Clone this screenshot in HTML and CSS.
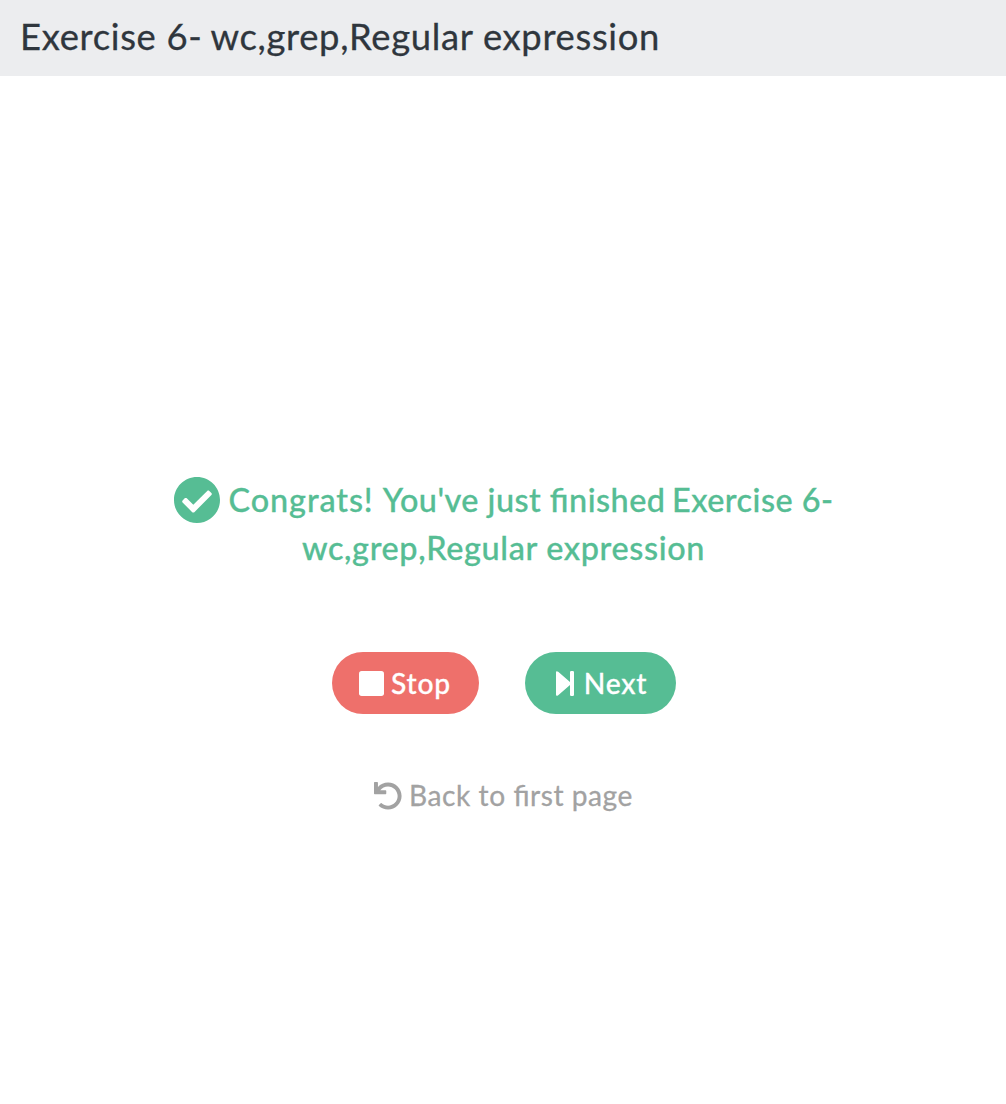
FILE: index.html
```html
<!DOCTYPE html>
<html lang="en">
<head>
<meta charset="utf-8">
<title>Exercise 6- wc,grep,Regular expression</title>
<link rel="stylesheet" href="styles.css">
</head>
<body>
<header class="bar"><h1 class="title">Exercise 6-<span class="tight"> </span>wc,grep,Regular expression</h1></header>
<main class="result">
  <p class="message"><svg class="check" viewBox="8 8 496 496"><path fill="currentColor" d="M504 256c0 136.967-111.033 248-248 248S8 392.967 8 256 119.033 8 256 8s248 111.033 248 248zM227.314 387.314l184-184c6.248-6.248 6.248-16.379 0-22.627l-22.627-22.627c-6.248-6.249-16.379-6.249-22.628 0L216 308.118l-70.059-70.059c-6.248-6.248-16.379-6.248-22.628 0l-22.627 22.627c-6.248 6.248-6.248 16.379 0 22.627l104 104c6.249 6.249 16.379 6.249 22.628.001z"/></svg><span><span class="lead">Congrats! </span>You've just finished<span class="tight"> </span>Exercise 6-<br></span><span class="name">wc,grep,Regular expression</span></p>
  <div class="actions">
    <button class="button stop"><svg class="stop-icon" viewBox="0 0 25 25"><rect width="25" height="25" rx="2.7" fill="currentColor"/></svg><span>Stop</span></button>
    <button class="button next"><svg class="next-icon" viewBox="0 0 18 25"><path fill="currentColor" d="M0 1.5Q0-.8 2.2 .8L14 11V1.2Q14 0 15.2 0H16.8Q18 0 18 1.2V23.8Q18 25 16.8 25H15.2Q14 25 14 23.8V14L2.2 24.2Q0 25.8 0 23.5Z"/></svg><span>Next</span></button>
  </div>
  <a class="back"><svg class="undo" viewBox="0 0 512 512"><path fill="currentColor" d="M212.333 224.333H12c-6.627 0-12-5.373-12-12V12C0 5.373 5.373 0 12 0h48c6.627 0 12 5.373 12 12v78.112C117.773 39.279 184.26 7.47 258.175 8.007c136.906.994 246.448 111.623 246.157 248.532C504.041 393.258 393.12 504 256.333 504c-64.089 0-122.496-24.313-166.51-64.215-5.099-4.622-5.334-12.554-.467-17.42l33.967-33.967c4.474-4.474 11.662-4.717 16.401-.525C170.76 415.336 211.58 432 256.333 432c97.268 0 176-78.716 176-176 0-97.267-78.716-176-176-176-58.496 0-110.28 28.476-142.274 72.333h98.274c6.627 0 12 5.373 12 12v48c0 6.627-5.373 12-12 12z"/></svg><span>Back to first page</span></a>
</main>
</body>
</html>
```
FILE: styles.css
```css
body { margin: 0; background: #fff; font-family: Lato, sans-serif; font-kerning: normal; font-feature-settings: "liga" 1; }
.bar { height: 76px; box-sizing: border-box; padding: 13px 20px; background: #ecedef; }
.title { margin: 0; font-size: 36.4px; line-height: 46px; font-weight: 400; letter-spacing: .67px; color: #2f363d; white-space: nowrap; -webkit-text-stroke: .3px currentColor; }
.tight { word-spacing: -2px; }
.lead { letter-spacing: .9px; }
.result { display: flex; flex-direction: column; align-items: center; padding: 400px 0 0 1px; }
.message { margin: 0; color: #56bd94; font-size: 32.4px; line-height: 48px; font-weight: 500; letter-spacing: .46px; text-align: center; white-space: nowrap; -webkit-text-stroke: .3px currentColor; }
.name { letter-spacing: .64px; }
.check { width: 46px; height: 46px; margin-right: 9px; vertical-align: -11px; }
.actions { display: flex; gap: 46px; margin-top: 80px; }
.button { display: flex; align-items: center; justify-content: center; height: 62px; padding: 0; border: 0; border-radius: 31px; color: #fff; font: 500 28.2px Lato, sans-serif; letter-spacing: .8px; }
.button span, .back span { -webkit-text-stroke: .3px currentColor; }
.stop { width: 147px; gap: 7px; background: #ee706b; }
.next { width: 151px; gap: 10px; padding-left: 3px; background: #56bd94; }
.stop-icon { width: 25px; height: 25px; }
.next-icon { width: 18px; height: 25px; }
.back { display: flex; align-items: center; gap: 7px; margin-top: 64px; color: #a2a2a2; font-size: 28.1px; line-height: 34px; font-weight: 400; letter-spacing: .55px; }
.undo { width: 28px; height: 28px; margin-top: 1px; }
```
